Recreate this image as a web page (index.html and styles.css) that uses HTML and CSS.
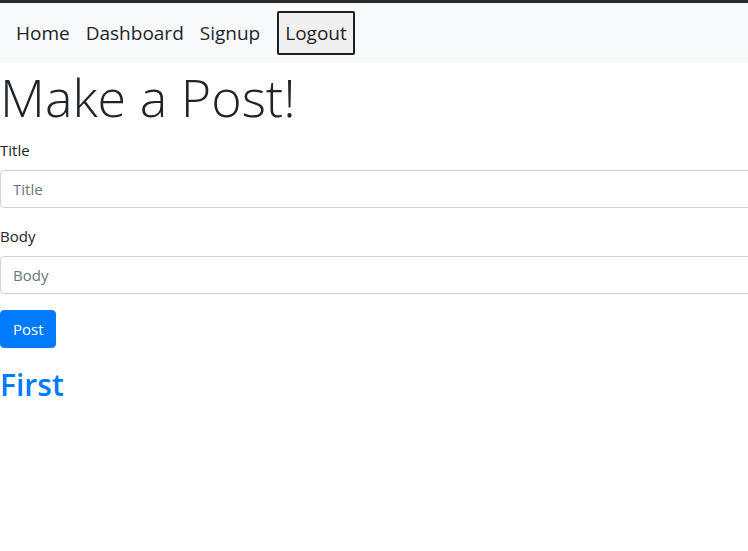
FILE: index.html
```html
<!DOCTYPE html>
<html>
<head>
<meta charset="utf-8">
<link rel="stylesheet" href="styles.css">
</head>
<body>
<nav class="navbar">
  <a class="nav-link" href="#">Home</a>
  <a class="nav-link" href="#">Dashboard</a>
  <a class="nav-link" href="#">Signup</a>
  <button class="logout" type="button">Logout</button>
</nav>
<main class="page">
  <h1 class="display">Make a Post!</h1>
  <form class="post-form">
    <div class="form-group">
      <label class="label" for="title">Title</label>
      <input class="form-control" id="title" type="text" placeholder="Title">
    </div>
    <div class="form-group">
      <label class="label" for="body">Body</label>
      <input class="form-control" id="body" type="text" placeholder="Body">
    </div>
    <button class="btn-primary" type="button">Post</button>
  </form>
  <h2 class="post-title"><a href="#">First</a></h2>
</main>
</body>
</html>
```
FILE: styles.css
```css
html {
  overflow-x: hidden;
}
body {
  margin: 0;
  font-family: "Open Sans", "Noto Sans", sans-serif;
  font-size: 15px;
  line-height: 1.5;
  color: #212529;
  background: #fff;
  border-top: 3px solid #2b2b2b;
}
.navbar {
  display: flex;
  align-items: center;
  gap: 16px;
  background: #f8f9fa;
  padding: 8px 16px;
}
.nav-link {
  font-size: 19px;
  color: #212529;
  text-decoration: none;
}
.logout {
  margin-left: 1px;
  font-family: inherit;
  font-size: 19px;
  line-height: 30px;
  color: #212529;
  background: #efefef;
  border: 2px solid #1f1f1f;
  border-radius: 2px;
  padding: 5px 6px;
}
.page {
  width: 770px;
}
.display {
  font-size: 52px;
  font-weight: 300;
  line-height: 67px;
  margin: 0 0 8px;
}
.form-group {
  margin-bottom: 16px;
}
.label {
  display: block;
  margin-bottom: 8px;
  line-height: 24px;
}
.form-control {
  display: block;
  box-sizing: border-box;
  width: 100%;
  height: 38px;
  padding: 6px 12px;
  font-family: inherit;
  font-size: 15px;
  color: #495057;
  border: 1px solid #ced4da;
  border-radius: 4px;
  background: #fff;
}
.form-control::placeholder {
  color: #6c757d;
}
.btn-primary {
  font-family: inherit;
  font-size: 15px;
  line-height: 24px;
  color: #fff;
  background: #007bff;
  border: 1px solid #007bff;
  border-radius: 4px;
  padding: 6px 12px;
  width: 56px;
  height: 38px;
}
.post-title {
  margin: 18px 0 0;
  font-size: 30px;
  font-weight: 600;
  line-height: 38px;
}
.post-title a {
  color: #007bff;
  text-decoration: none;
}
```
